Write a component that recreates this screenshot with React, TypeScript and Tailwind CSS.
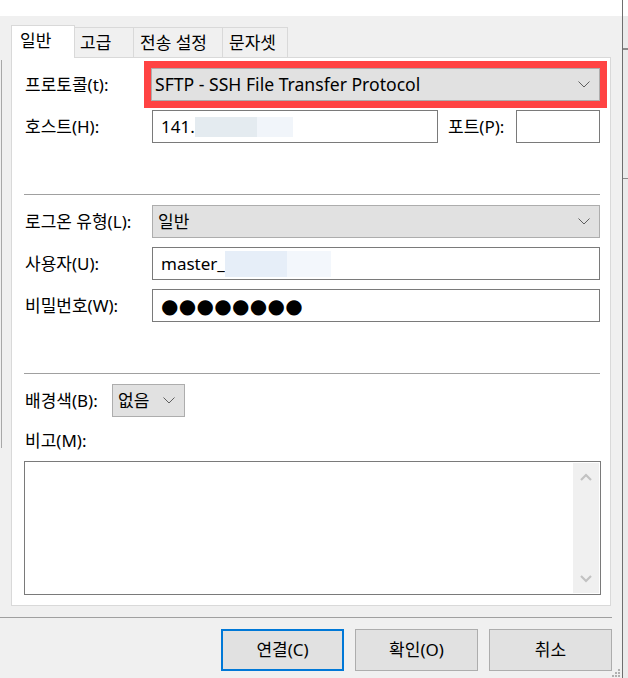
import React from "react";

function Chevron() {
  return (
    <svg width="12" height="7" viewBox="0 0 12 7" className="shrink-0">
      <path d="M0.5 0.5 L6 6 L11.5 0.5" fill="none" stroke="#5f5f5f" strokeWidth="1" />
    </svg>
  );
}

function ScrollArrow({ up }: { up?: boolean }) {
  return (
    <svg width="12" height="8" viewBox="0 0 12 8">
      <path
        d={up ? "M1 7 L6 2 L11 7" : "M1 1 L6 6 L11 1"}
        fill="none"
        stroke="#c2c2c2"
        strokeWidth="2.2"
      />
    </svg>
  );
}

function Label({ text, w }: { text: string; w: string }) {
  return <div className={`${w} shrink-0 text-[17px] leading-none`}>{text}</div>;
}

export default function App() {
  return (
    <div className="relative flex h-[678px] w-[628px] overflow-hidden bg-[#f0f0f0] font-['Noto_Sans','Noto_Sans_CJK_KR',sans-serif] text-black">
      {/* left edge of the window behind */}
      <div className="absolute left-px top-[60px] h-[388px] w-px bg-[#a8a8a8]" />

      <div className="flex w-[622px] shrink-0 flex-col">
        <div className="h-4 shrink-0 bg-white" />

        <div className="px-[11px] pt-[9px]">
          {/* Tabs */}
          <div className="relative z-10 -mb-px flex h-[33px] items-end text-[17px] leading-none">
            <div className="h-[33px] w-[64px] border border-b-0 border-[#d9d9d9] bg-white pl-[8px] pt-[6px]">
              일반
            </div>
            <div className="mb-px h-[30px] w-[59px] border-r border-t border-[#d9d9d9] pl-[5px] pt-[6px]">
              고급
            </div>
            <div className="mb-px h-[30px] w-[89px] border-r border-t border-[#d9d9d9] pl-[6px] pt-[6px]">
              전송 설정
            </div>
            <div className="mb-px h-[30px] w-[65px] border-r border-t border-[#d9d9d9] pl-[6px] pt-[6px]">
              문자셋
            </div>
          </div>

          {/* Panel */}
          <div className="flex h-[549px] flex-col border border-[#d9d9d9] bg-white pl-[13px]">
            {/* 프로토콜 */}
            <div className="mt-[3px] flex h-[47px] items-center">
              <Label text="프로토콜(t):" w="w-[119px]" />
              <div className="border-[7px] border-[#ff4343]">
                <div className="flex h-[33px] w-[449px] items-center justify-between border border-[#adadad] bg-[#e1e1e1] pl-[3px] pr-[9px] text-[17.6px]">
                  <span>SFTP - SSH File Transfer Protocol</span>
                  <Chevron />
                </div>
              </div>
            </div>

            {/* 호스트 / 포트 */}
            <div className="mt-[2px] flex h-[33px] items-center">
              <Label text="호스트(H):" w="w-[127px]" />
              <div className="flex h-[33px] w-[286px] items-center border border-[#7a7a7a] pl-[8px] text-[17px]">
                <span>141.</span>
                <span className="inline-block h-[20px] w-[62px] bg-[#e4ebf0]" />
                <span className="inline-block h-[20px] w-[36px] bg-[#f1f5fa]" />
              </div>
              <Label text="포트(P):" w="ml-[10px] w-[68px]" />
              <div className="h-[33px] w-[84px] border border-[#7a7a7a]" />
            </div>

            <div className="ml-[-1px] mt-[51px] w-[576px] border-t border-[#a0a0a0]" />

            {/* 로그온 유형 */}
            <div className="mt-[10px] flex h-[33px] items-center">
              <Label text="로그온 유형(L):" w="w-[127px]" />
              <div className="flex h-[33px] w-[448px] items-center justify-between border border-[#adadad] bg-[#e1e1e1] pl-[5px] pr-[9px] text-[17px]">
                <span>일반</span>
                <Chevron />
              </div>
            </div>

            {/* 사용자 */}
            <div className="mt-[9px] flex h-[33px] items-center">
              <Label text="사용자(U):" w="w-[127px]" />
              <div className="flex h-[33px] w-[448px] items-center border border-[#7a7a7a] pl-[8px] text-[17px]">
                <span>master_</span>
                <span className="inline-block h-[26px] w-[62px] bg-[#e6eef8]" />
                <span className="inline-block h-[26px] w-[44px] bg-[#f3f7fc]" />
              </div>
            </div>

            {/* 비밀번호 */}
            <div className="mt-[9px] flex h-[33px] items-center">
              <Label text="비밀번호(W):" w="w-[127px]" />
              <div className="flex h-[33px] w-[448px] items-center border border-[#7a7a7a] pl-[8px] font-['DejaVu_Sans',sans-serif] text-[20px] tracking-[0.3px]">
                ●●●●●●●●
              </div>
            </div>

            <div className="ml-[-1px] mt-[51px] w-[576px] border-t border-[#a0a0a0]" />

            {/* 배경색 */}
            <div className="mt-[10px] flex h-[33px] items-center">
              <Label text="배경색(B):" w="w-[87px]" />
              <div className="flex h-[33px] w-[73px] items-center justify-between border border-[#adadad] bg-[#e1e1e1] pl-[5px] pr-[9px] text-[17px]">
                <span>없음</span>
                <Chevron />
              </div>
            </div>

            {/* 비고 */}
            <div className="mt-[12px] flex h-[22px] items-center">
              <Label text="비고(M):" w="w-[100px]" />
            </div>

            <div className="ml-[-1px] mt-[10px] flex h-[134px] w-[577px] justify-end border border-[#7a7a7a] p-px">
              <div className="flex w-[26px] flex-col items-center justify-between bg-[#f0f0f0] py-[10px]">
                <ScrollArrow up />
                <ScrollArrow />
              </div>
            </div>
          </div>
        </div>

        {/* Bottom separator */}
        <div className="mt-[11px] w-[612px] border-t border-[#a0a0a0]" />

        {/* Buttons */}
        <div className="mt-[11px] flex justify-end gap-[11px] pr-[10px] text-[17px]">
          <button className="flex h-[42px] w-[123px] items-center justify-center border-2 border-[#0078d7] bg-[#e1e1e1]">
            연결(C)
          </button>
          <button className="flex h-[42px] w-[123px] items-center justify-center border border-[#adadad] bg-[#e1e1e1]">
            확인(O)
          </button>
          <button className="flex h-[42px] w-[123px] items-center justify-center border border-[#adadad] bg-[#e1e1e1]">
            취소
          </button>
        </div>
      </div>

      {/* right edge */}
      <div className="flex w-[6px] flex-col border-l border-[#6e6e6e] bg-[#ebebeb]">
        <div className="h-4 bg-white" />
        <div className="mt-[32px] h-[2px] bg-[#8a8a8a]" />
        <div className="mt-[128px] h-px bg-[#8a8a8a]" />
      </div>

      {/* resize grip */}
      <div className="absolute bottom-[1px] left-[612px] grid grid-cols-3 gap-px">
        <span />
        <span />
        <span className="h-[2px] w-[2px] bg-[#b0b0b0]" />
        <span />
        <span className="h-[2px] w-[2px] bg-[#b0b0b0]" />
        <span className="h-[2px] w-[2px] bg-[#b0b0b0]" />
        <span className="h-[2px] w-[2px] bg-[#b0b0b0]" />
        <span className="h-[2px] w-[2px] bg-[#b0b0b0]" />
        <span className="h-[2px] w-[2px] bg-[#b0b0b0]" />
      </div>
    </div>
  );
}
